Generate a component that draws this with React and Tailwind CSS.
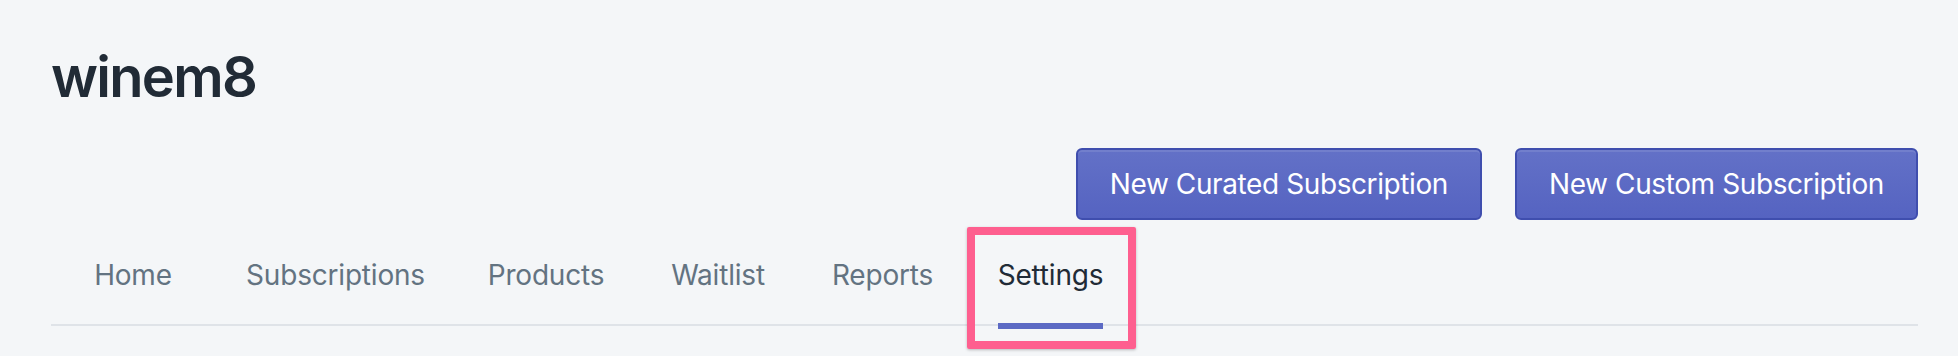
const TABS = [
  { label: 'Home', width: 'w-[152px]' },
  { label: 'Subscriptions', width: 'w-[253px]' },
  { label: 'Products', width: 'w-[168px]' },
  { label: 'Waitlist', width: 'w-[176px]' },
  { label: 'Reports', width: 'w-[153px]' },
  { label: 'Settings', width: 'w-[183px]', active: true },
];

function PrimaryButton({ children }) {
  return (
    <button className="h-[72px] px-[32px] rounded-[6px] border-2 border-[#3f4eae] bg-gradient-to-b from-[#6371c7] to-[#5563c1] text-white text-[28px] leading-[36px] tracking-[-0.4px] shadow-[inset_0_2px_0_0_rgba(255,255,255,0.1)]">
      {children}
    </button>
  );
}

export default function App() {
  return (
    <div className="relative h-[356px] bg-[#f4f6f8] pl-[51px] pr-[40px] font-['Inter',sans-serif] overflow-hidden">
      <h1 className="pt-[45px] text-[56px] leading-[64px] font-semibold text-[#212b36] tracking-[-1.7px]">
        winem8
      </h1>

      <div className="mt-[39px] flex justify-end gap-[33px]">
        <PrimaryButton>New Curated Subscription</PrimaryButton>
        <PrimaryButton>New Custom Subscription</PrimaryButton>
      </div>

      <ul className="mt-[35px] flex border-b-2 border-[#dfe3e8] pl-[6px]">
        {TABS.map(tab => (
          <li key={tab.label} className={`${tab.width} h-[69px] flex justify-center`}>
            <span
              className={`relative h-[40px] text-[28px] leading-[40px] tracking-[-0.2px] ${
                tab.active ? 'text-[#212b36]' : 'text-[#637381]'
              }`}
            >
              {tab.label}
              {tab.active && (
                <span className="absolute left-0 right-0 top-[68px] h-[6px] bg-[#5c6ac4]" />
              )}
            </span>
          </li>
        ))}
      </ul>

      {/* annotation box round the active tab */}
      <div className="absolute left-[967px] top-[227px] w-[169px] h-[122px] border-[8px] border-[#fe5f8f] rounded-[2px] shadow-[0_1px_3px_rgba(0,0,0,0.25)]" />
    </div>
  );
}
